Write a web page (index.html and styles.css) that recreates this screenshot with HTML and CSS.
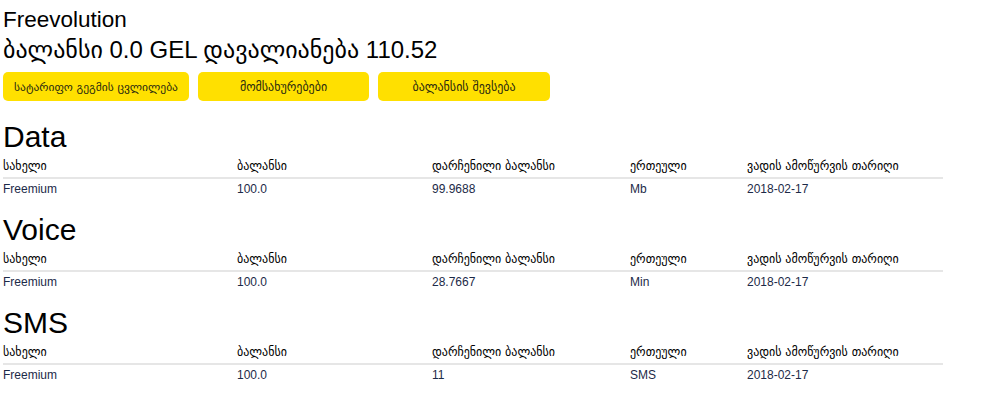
FILE: index.html
```html
<!DOCTYPE html>
<html lang="ka">
<head>
<meta charset="utf-8">
<title>Freevolution</title>
<link rel="stylesheet" href="styles.css">
</head>
<body>
<div class="page">
  <div class="plan">Freevolution</div>
  <div class="balance">ბალანსი 0.0 GEL დავალიანება 110.52</div>
  <div class="actions">
    <button class="btn btn-plan">სატარიფო გეგმის ცვლილება</button>
    <button class="btn btn-svc">მომსახურებები</button>
    <button class="btn btn-topup">ბალანსის შევსება</button>
  </div>

  <section class="usage">
    <h2 class="usage-title">Data</h2>
    <table class="usage-table">
      <thead>
        <tr><th class="c1">სახელი</th><th class="c2">ბალანსი</th><th class="c3">დარჩენილი ბალანსი</th><th class="c4">ერთეული</th><th class="c5">ვადის ამოწურვის თარიღი</th></tr>
      </thead>
      <tbody>
        <tr><td>Freemium</td><td>100.0</td><td>99.9688</td><td>Mb</td><td>2018-02-17</td></tr>
      </tbody>
    </table>
  </section>

  <section class="usage">
    <h2 class="usage-title">Voice</h2>
    <table class="usage-table">
      <thead>
        <tr><th class="c1">სახელი</th><th class="c2">ბალანსი</th><th class="c3">დარჩენილი ბალანსი</th><th class="c4">ერთეული</th><th class="c5">ვადის ამოწურვის თარიღი</th></tr>
      </thead>
      <tbody>
        <tr><td>Freemium</td><td>100.0</td><td>28.7667</td><td>Min</td><td>2018-02-17</td></tr>
      </tbody>
    </table>
  </section>

  <section class="usage">
    <h2 class="usage-title">SMS</h2>
    <table class="usage-table">
      <thead>
        <tr><th class="c1">სახელი</th><th class="c2">ბალანსი</th><th class="c3">დარჩენილი ბალანსი</th><th class="c4">ერთეული</th><th class="c5">ვადის ამოწურვის თარიღი</th></tr>
      </thead>
      <tbody>
        <tr><td>Freemium</td><td>100.0</td><td>11</td><td>SMS</td><td>2018-02-17</td></tr>
      </tbody>
    </table>
  </section>
</div>
</body>
</html>
```
FILE: styles.css
```css
html, body {
  margin: 0;
  padding: 0;
  background: #fff;
}
body {
  font-family: "Liberation Sans", "DejaVu Sans", Arial, sans-serif;
  color: #000;
}
.page {
  padding: 8px 3px 0 3px;
}
.plan {
  font-size: 22.5px;
  line-height: 24px;
}
.balance {
  font-size: 24px;
  line-height: 26px;
  margin-top: 5px;
}
.actions {
  display: flex;
  gap: 9px;
  margin-top: 9px;
}
.btn {
  font-family: "DejaVu Sans", sans-serif;
  font-size: 12px;
  color: #2a2a10;
  background: #ffe000;
  border: 0;
  border-radius: 5px;
  height: 29px;
  padding: 0;
}
.btn-plan { width: 186px; font-size: 11.5px; }
.btn-svc { width: 171px; }
.btn-topup { width: 172px; }

.usage {
  margin-top: 19px;
}
.usage + .usage {
  margin-top: 13px;
}
.usage-title {
  font-size: 30px;
  font-weight: normal;
  line-height: 33px;
  margin: 0;
}
.usage-table {
  border-collapse: collapse;
  table-layout: fixed;
  width: 940px;
  margin-top: 3px;
}
.usage-table th,
.usage-table td {
  text-align: left;
  padding: 3px 0;
  line-height: 15px;
  font-size: 12px;
}
.usage-table th {
  font-family: "DejaVu Sans", sans-serif;
  font-weight: normal;
  font-size: 12px;
  border-bottom: 2px solid #e6e6e6;
}
.usage-table td {
  color: #1c2a48;
}
.c1 { width: 234px; }
.c2 { width: 195px; }
.c3 { width: 198px; }
.c4 { width: 117px; }
.c5 { width: 196px; }
```
